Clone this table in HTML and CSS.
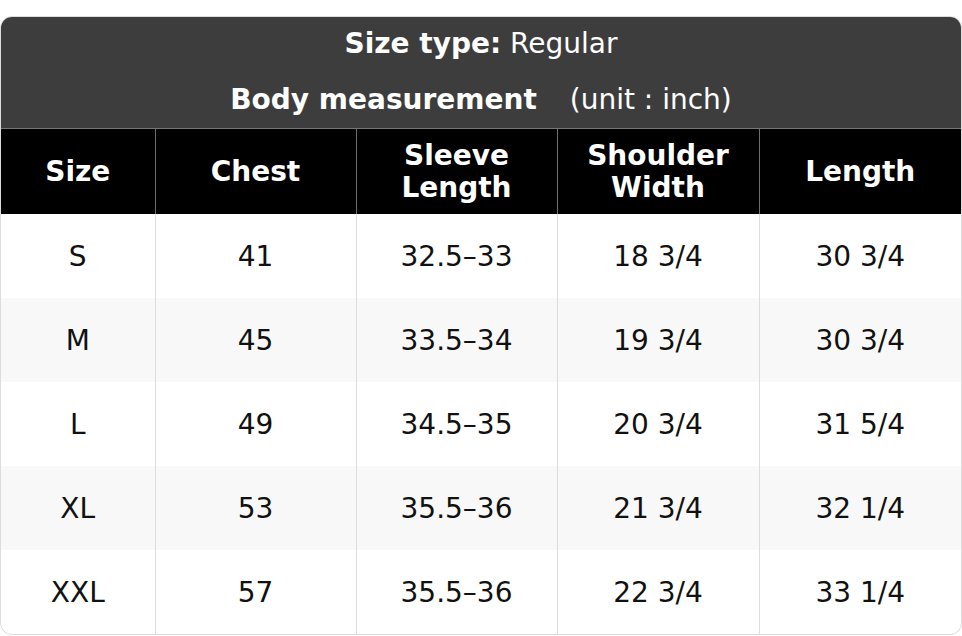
FILE: index.html
```html
<!DOCTYPE html>
<html>
<head>
<meta charset="utf-8">
<link rel="stylesheet" href="styles.css">
</head>
<body>
<div class="card">
  <div class="caption">
    <div class="cap-line first"><b>Size type:</b> Regular</div>
    <div class="cap-line second"><b>Body measurement</b><span class="unit">(unit : inch)</span></div>
  </div>
  <table class="chart">
    <colgroup>
      <col class="c1"><col class="c2"><col class="c3"><col class="c4"><col class="c5">
    </colgroup>
    <thead>
      <tr><th>Size</th><th>Chest</th><th>Sleeve<br>Length</th><th>Shoulder<br>Width</th><th>Length</th></tr>
    </thead>
    <tbody>
      <tr><td>S</td><td>41</td><td>32.5–33</td><td>18 3/4</td><td>30 3/4</td></tr>
      <tr><td>M</td><td>45</td><td>33.5–34</td><td>19 3/4</td><td>30 3/4</td></tr>
      <tr><td>L</td><td>49</td><td>34.5–35</td><td>20 3/4</td><td>31 5/4</td></tr>
      <tr><td>XL</td><td>53</td><td>35.5–36</td><td>21 3/4</td><td>32 1/4</td></tr>
      <tr><td>XXL</td><td>57</td><td>35.5–36</td><td>22 3/4</td><td>33 1/4</td></tr>
    </tbody>
  </table>
</div>
</body>
</html>
```
FILE: styles.css
```css
html, body {
  margin: 0;
  padding: 0;
  background: #ffffff;
}
body {
  padding-top: 16px;
  font-family: "DejaVu Sans", sans-serif;
}
.card {
  width: 962px;
  box-sizing: border-box;
  border: 1px solid #dcdcdc;
  border-radius: 12px;
  overflow: hidden;
  background: #ffffff;
}
.caption {
  background: #3d3d3d;
  color: #ffffff;
  text-align: center;
  font-size: 28px;
  border-bottom: 1px solid #777777;
}
.cap-line.first {
  height: 53px;
  line-height: 53px;
}
.cap-line.second {
  height: 56px;
  line-height: 56px;
  padding-top: 2px;
}
.unit {
  margin-left: 33px;
}
.chart {
  width: 100%;
  border-collapse: collapse;
  table-layout: fixed;
  font-size: 28px;
}
.c1 { width: 154px; }
.c2 { width: 201px; }
.c3 { width: 201px; }
.c4 { width: 202px; }
.c5 { width: 202px; }
.chart th {
  background: #000000;
  color: #ffffff;
  font-weight: bold;
  height: 85px;
  padding: 0;
  line-height: 32px;
  border-left: 1px solid #6e6e6e;
  box-sizing: border-box;
}
.chart th:first-child,
.chart td:first-child {
  border-left: none;
}
.chart td {
  height: 84px;
  padding: 0;
  text-align: center;
  color: #111111;
  border-left: 1px solid #dddddd;
  box-sizing: border-box;
}
.chart tbody tr:nth-child(even) td {
  background: #f8f8f8;
}
```
